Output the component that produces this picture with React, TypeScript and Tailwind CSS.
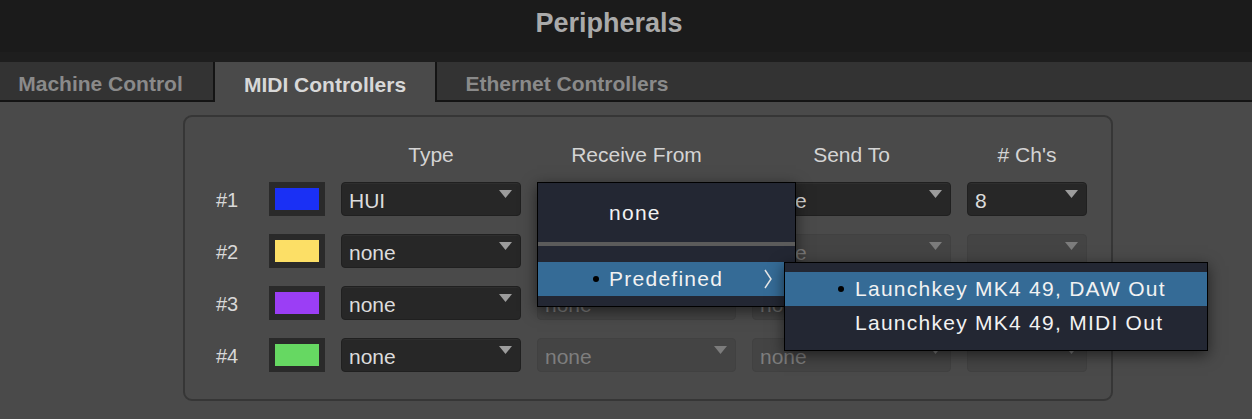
import React from 'react'

const font = { fontFamily: '"Liberation Sans", Arial, sans-serif' }

interface Row {
  num: string
  color: string
  type: string
  receive: string
  receiveOn: boolean
  send: string
  sendOn: boolean
  chs: string
  chsOn: boolean
}

const rows: Row[] = [
  { num: '#1', color: 'bg-[#1a30f5]', type: 'HUI', receive: '', receiveOn: true, send: 'none', sendOn: true, chs: '8', chsOn: true },
  { num: '#2', color: 'bg-[#fcdf66]', type: 'none', receive: 'none', receiveOn: false, send: 'none', sendOn: false, chs: '', chsOn: false },
  { num: '#3', color: 'bg-[#9b3ef5]', type: 'none', receive: 'none', receiveOn: false, send: 'none', sendOn: false, chs: '', chsOn: false },
  { num: '#4', color: 'bg-[#66d862]', type: 'none', receive: 'none', receiveOn: false, send: 'none', sendOn: false, chs: '', chsOn: false },
]

const Arrow: React.FC<{ on: boolean }> = ({ on }) => (
  <svg width="13" height="8" viewBox="0 0 13 8" className="absolute right-[8px] top-[7px]">
    <polygon points="0,0 13,0 6.5,8" fill={on ? '#9c9c9c' : '#7c7c7c'} />
  </svg>
)

const Select: React.FC<{ value: string; on: boolean }> = ({ value, on }) => (
  <div
    className={
      on
        ? 'relative h-[34px] rounded-[4px] bg-[#272727] border border-[#202020] shadow-[inset_0_1px_0_#2e2e2e] flex items-center pl-[7px] text-[21px] text-[#dcdcdc]'
        : 'relative h-[34px] rounded-[4px] bg-[#444444] border border-[#414141] flex items-center pl-[7px] text-[21px] text-[#7e7e7e]'
    }
  >
    <span className="leading-none pt-[3px]">{value}</span>
    <Arrow on={on} />
  </div>
)

export default function App() {
  return (
    <div className="relative w-[1252px] h-[419px] overflow-hidden bg-[#4a4a4a] flex flex-col" style={font}>
      {/* title bar */}
      <div className="h-[62px] flex flex-col bg-[#1b1b1b]">
        <div className="h-[52px] flex items-center justify-center pb-[6px] pr-[34px]">
          <span className="text-[27px] font-bold text-[#aaaaaa]">Peripherals</span>
        </div>
        <div className="h-[10px] bg-[#1e1e1e]" />
      </div>

      {/* tabs */}
      <div className="h-[40px] flex bg-[#333333] border-b-2 border-[#141414]">
        <div className="w-[215px] flex items-center justify-center border-r-2 border-[#141414] text-[21px] font-bold text-[#8a8a8a] pt-[6px] pr-[12px]">
          Machine Control
        </div>
        <div className="w-[222px] -mb-[2px] bg-[#4a4a4a] flex items-center justify-center text-[21px] font-bold text-[#d8d8d8] pt-[6px] border-r-2 border-[#141414]">
          MIDI Controllers
        </div>
        <div className="w-[260px] flex items-center justify-center text-[21px] font-bold text-[#8a8a8a] pt-[6px]">
          Ethernet Controllers
        </div>
      </div>

      {/* body */}
      <div className="pl-[183px] pt-[13px]">
        <div className="w-[930px] h-[286px] rounded-[9px] border-2 border-[#363636] bg-[#4a4a4a] pl-[30px] pt-[22px]">
          <div className="grid grid-cols-[38px_56px_180px_199px_199px_120px] gap-x-[16px] text-[21px] text-[#d4d4d4]">
            <div />
            <div />
            <div className="text-center">Type</div>
            <div className="text-center">Receive From</div>
            <div className="text-center">Send To</div>
            <div className="text-center">&#35; Ch's</div>
          </div>
          <div className="mt-[11px] flex flex-col gap-[18px]">
            {rows.map((r) => (
              <div key={r.num} className="grid grid-cols-[38px_56px_180px_199px_199px_120px] gap-x-[16px] items-center">
                <div className="text-[20px] text-[#d8d8d8] pl-[1px] pt-[3px]">{r.num}</div>
                <div className="h-[34px] bg-[#2a2a2a] p-[6px] flex">
                  <div className={`flex-1 ${r.color}`} />
                </div>
                <Select value={r.type} on />
                <Select value={r.receive} on={r.receiveOn} />
                <Select value={r.send} on={r.sendOn} />
                <Select value={r.chs} on={r.chsOn} />
              </div>
            ))}
          </div>
        </div>
      </div>

      {/* receive from popup menu */}
      <div className="absolute left-[537px] top-[182px] w-[259px] bg-[#232733] border border-black shadow-[0_4px_14px_rgba(0,0,0,0.55)] pt-[12px] pb-[10px] text-[21px] tracking-[0.06em] text-[#f2f2f2]">
        <div className="h-[36px] flex items-center pl-[71px]">none</div>
        <div className="mt-[11px] h-[4px] bg-[#5b5b5b]" />
        <div className="mt-[16px] h-[34px] bg-[#356b96] relative flex items-center pl-[71px]">
          <span className="absolute left-[55px] top-[14px] w-[6px] h-[6px] rounded-full bg-black" />
          <span>Predefined</span>
          <svg width="10" height="20" viewBox="0 0 10 20" className="absolute right-[22px] top-[7px]">
            <polyline points="2,1 8,10 2,19" fill="none" stroke="#e6e6e6" strokeWidth="1.5" />
          </svg>
        </div>
      </div>

      {/* predefined submenu */}
      <div className="absolute left-[784px] top-[262px] w-[424px] bg-[#232733] border border-black shadow-[0_4px_14px_rgba(0,0,0,0.55)] pt-[9px] pb-[10px] text-[21px] tracking-[0.06em] text-[#f2f2f2]">
        <div className="h-[34px] bg-[#356b96] relative flex items-center pl-[70px]">
          <span className="absolute left-[53px] top-[14px] w-[6px] h-[6px] rounded-full bg-black" />
          <span>Launchkey MK4 49, DAW Out</span>
        </div>
        <div className="h-[34px] flex items-center pl-[70px]">Launchkey MK4 49, MIDI Out</div>
      </div>
    </div>
  )
}
